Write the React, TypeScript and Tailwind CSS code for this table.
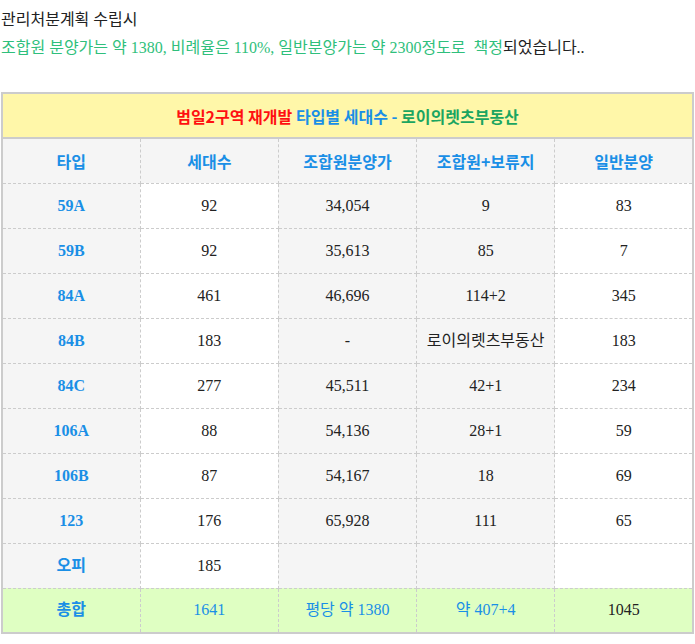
const rows = [
  ['59A', '92', '34,054', '9', '83'],
  ['59B', '92', '35,613', '85', '7'],
  ['84A', '461', '46,696', '114+2', '345'],
  ['84B', '183', '-', '로이의렛츠부동산', '183'],
  ['84C', '277', '45,511', '42+1', '234'],
  ['106A', '88', '54,136', '28+1', '59'],
  ['106B', '87', '54,167', '18', '69'],
  ['123', '176', '65,928', '111', '65'],
  ['오피', '185', '', '', ''],
]

const headers = ['타입', '세대수', '조합원분양가', '조합원+보류지', '일반분양']

const serif = "font-['Liberation_Serif','Noto_Sans_CJK_KR',serif]"
const sans = "font-['Noto_Sans_CJK_KR','Liberation_Sans',sans-serif]"

// column backgrounds for body rows
const colBg = ['bg-[#f5f5f5]', 'bg-white', 'bg-[#f5f5f5]', 'bg-[#f5f5f5]', 'bg-white']

const cell = 'h-[45px] border border-dashed border-[#cccccc] text-center align-middle p-0'

export default function App() {
  return (
    <div className="w-[695px] min-h-[644px] bg-white text-[16px]">
      {/* Intro text */}
      <div className={`pt-[6px] pl-[1px] leading-[28px] ${serif}`}>
        <p className="text-[#222]">관리처분계획 수립시</p>
        <p className="text-[#2fbf7c]">
          조합원 분양가는 약 1380, 비례율은 110%, 일반분양가는 약 2300정도로&nbsp;&nbsp;책정
          <span className="text-[#222]">되었습니다..</span>
        </p>
      </div>

      {/* Table */}
      <table className="mt-[30px] ml-[1px] w-[693px] table-fixed border-collapse border-2 border-solid border-[#cccccc]">
        <tbody>
          <tr>
            <td
              colSpan={5}
              className={`h-[45px] bg-[#fff7a9] text-center align-middle font-bold ${sans} border-2 border-solid border-[#cccccc]`}
            >
              <span className="text-[#ff1010]">범일2구역 재개발 </span>
              <span className="text-[#1a8fe6]">타입별 세대수 - </span>
              <span className="text-[#1aa560]">로이의렛츠부동산</span>
            </td>
          </tr>
          <tr>
            {headers.map((h) => (
              <td key={h} className={`${cell} bg-[#f5f5f5] font-bold text-[#1a8fe6] ${sans}`}>
                {h}
              </td>
            ))}
          </tr>
          {rows.map((r) => (
            <tr key={r[0]}>
              {r.map((v, i) => (
                <td
                  key={i}
                  className={`${cell} ${colBg[i]} ${serif} ${
                    i === 0 ? 'text-[#1a8fe6] font-semibold' : 'text-[#222]'
                  }`}
                >
                  {v}
                </td>
              ))}
            </tr>
          ))}
          <tr className="bg-[#dfffc2]">
            <td className={`${cell} text-[#1a8fe6] font-semibold ${serif}`}>총합</td>
            <td className={`${cell} text-[#1a8fe6] ${serif}`}>1641</td>
            <td className={`${cell} text-[#1a8fe6] ${serif}`}>평당 약 1380</td>
            <td className={`${cell} text-[#1a8fe6] ${serif}`}>약 407+4</td>
            <td className={`${cell} text-[#222] ${serif}`}>1045</td>
          </tr>
        </tbody>
      </table>
    </div>
  )
}
